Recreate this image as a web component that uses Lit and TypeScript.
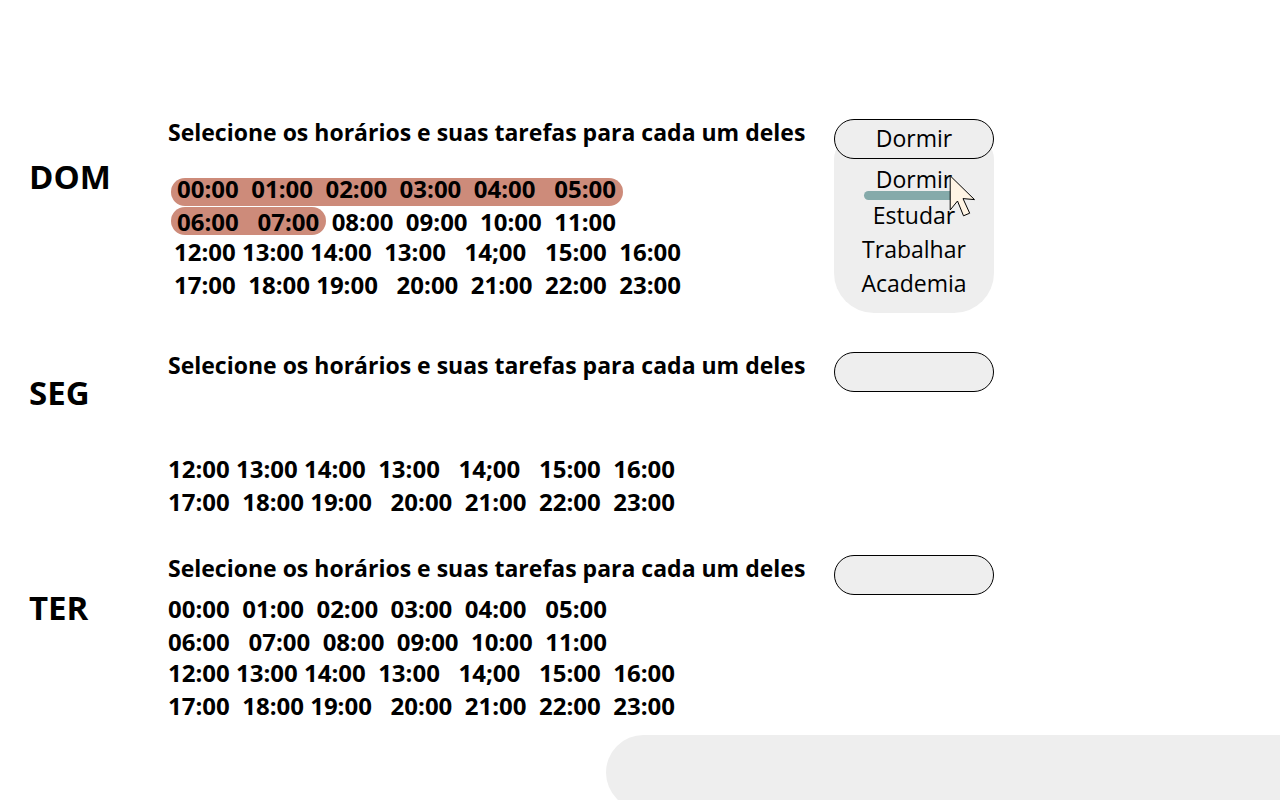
import { LitElement, html, css, nothing } from "lit";
import { customElement, property, state } from "lit/decorators.js";

interface Day {
  id: string;
  label: string;
  early: string[];
  late: string[];
  marks: number[];
  task: string;
  open: boolean;
}

const EARLY = [
  "00:00  01:00  02:00  03:00  04:00   05:00",
  "06:00   07:00  08:00  09:00  10:00  11:00",
];
const LATE = [
  "12:00 13:00 14:00  13:00   14;00   15:00  16:00",
  "17:00  18:00 19:00   20:00  21:00  22:00  23:00",
];
const TASKS = ["Dormir", "Estudar", "Trabalhar", "Academia"];

const DAYS: Day[] = [
  { id: "dom", label: "DOM", early: EARLY, late: LATE, marks: [452, 155], task: "Dormir", open: true },
  { id: "seg", label: "SEG", early: [], late: LATE, marks: [], task: "", open: false },
  { id: "ter", label: "TER", early: EARLY, late: LATE, marks: [], task: "", open: false },
];

@customElement("task-picker")
export class TaskPicker extends LitElement {
  static styles = css`
    :host {
      display: block;
      position: relative;
      font: 23px/32px "Open Sans", "Noto Sans", sans-serif;
    }
    .field {
      position: relative;
      z-index: 2;
      display: block;
      box-sizing: border-box;
      width: 100%;
      height: 40px;
      margin: 0;
      padding: 0 0 2px;
      border: 1px solid #000;
      border-radius: 20px;
      background: #eee;
      color: #000;
      font: inherit;
      text-align: center;
      text-align-last: center;
      appearance: none;
    }
    .menu {
      position: absolute;
      z-index: 1;
      top: 20px;
      left: 0;
      right: 0;
      display: flex;
      flex-direction: column;
      align-items: center;
      gap: 2px;
      box-sizing: border-box;
      padding: 24px 0 14px;
      border-radius: 20px 20px 40px 40px;
      background: #eee;
    }
    .option {
      position: relative;
      margin: 0;
      padding: 0;
      border: 0;
      background: none;
      color: #000;
      font: inherit;
    }
    .option.current {
      margin-bottom: 2px;
    }
    .option.current::after {
      content: "";
      position: absolute;
      left: -12px;
      right: -4px;
      bottom: -5px;
      height: 9px;
      border-radius: 5px;
      background: #85aaaa;
    }
    .pointer {
      position: absolute;
      z-index: 3;
      top: 56px;
      left: 115px;
      width: 28px;
      height: 44px;
      pointer-events: none;
    }
  `;

  @property() name = "";
  @property() value = "";
  @property({ type: Boolean }) open = false;

  private pick(task: string) {
    this.value = task;
    this.open = false;
  }

  render() {
    return html`
      <select
        class="field"
        aria-label="Tarefa de ${this.name}"
        @change=${(e: Event) => (this.value = (e.target as HTMLSelectElement).value)}
      >
        <option value="" ?selected=${this.value === ""}></option>
        ${TASKS.map((t) => html`<option value=${t} ?selected=${this.value === t}>${t}</option>`)}
      </select>
      ${this.open
        ? html`
            <div class="menu" role="listbox" aria-label="Tarefas">
              ${TASKS.map(
                (t) => html`<button
                  type="button"
                  role="option"
                  aria-selected=${this.value === t}
                  class="option ${this.value === t ? "current" : ""}"
                  @click=${() => this.pick(t)}
                >${t}</button>`
              )}
            </div>
            <svg class="pointer" viewBox="0 0 28 44" aria-hidden="true">
              <path
                d="M1.2 0.8 L25.5 24.6 L14 23.6 L20.7 38.2 L14.5 40.8 L8.5 26 L1.2 35 Z"
                fill="#fff4e4"
                stroke="#000"
                stroke-width="1"
              />
            </svg>
          `
        : nothing}
    `;
  }
}

@customElement("app-root")
export class AppRoot extends LitElement {
  static styles = css`
    :host {
      display: block;
      color: #000;
      background: #fff;
      font-family: "Open Sans", "Noto Sans", sans-serif;
    }
    .page {
      box-sizing: border-box;
      height: 100vh;
      overflow: hidden;
      padding-top: 116px;
    }
    .day {
      display: grid;
      grid-template-columns: 139px 666px 160px;
      align-items: start;
      padding-left: 29px;
    }
    .name {
      margin: 0;
      font-size: 33px;
      line-height: 46px;
      font-weight: 700;
    }
    .title {
      margin: 0;
      font-size: 23px;
      line-height: 32px;
      font-weight: 700;
      white-space: nowrap;
    }
    .hours {
      position: relative;
      font-size: 24px;
      line-height: 33px;
      font-weight: 700;
    }
    .row {
      position: relative;
      margin: 0;
      white-space: pre;
    }
    .late {
      margin-top: -2px;
    }
    .marks {
      position: absolute;
      top: 6px;
      left: 3px;
      display: flex;
      flex-direction: column;
      gap: 1px;
    }
    .mark {
      height: 28px;
      border-radius: 14px;
      background: #cd8b7a;
    }
    .picker {
      margin-top: 3px;
    }
    .dom {
      margin-bottom: 48px;
    }
    .dom .name {
      margin-top: 38px;
    }
    .dom .early {
      margin-top: 24px;
      padding-left: 9px;
    }
    .dom .late {
      margin-top: -3px;
      padding-left: 6px;
    }
    .seg {
      margin-bottom: 34px;
    }
    .seg .name {
      margin-top: 21px;
    }
    .seg .late {
      margin-top: 71px;
    }
    .ter {
      margin-bottom: 13px;
    }
    .ter .name {
      margin-top: 33px;
    }
    .ter .early {
      margin-top: 8px;
    }
    .bar {
      height: 75px;
      margin-left: 606px;
      margin-right: -40px;
      border-radius: 38px;
      background: #eee;
    }
  `;

  @state() private days = DAYS;

  private block(kind: string, rows: string[], marks: number[] = []) {
    if (!rows.length) return nothing;
    return html`<div class="hours ${kind}">
      ${marks.length
        ? html`<div class="marks">
            ${marks.map((w) => html`<div class="mark" style="width:${w}px"></div>`)}
          </div>`
        : nothing}
      ${rows.map((r) => html`<p class="row">${r}</p>`)}
    </div>`;
  }

  render() {
    return html`<main class="page">
      ${this.days.map(
        (d) => html`<section class="day ${d.id}">
          <h2 class="name">${d.label}</h2>
          <div>
            <h3 class="title">Selecione os horários e suas tarefas para cada um deles</h3>
            ${this.block("early", d.early, d.marks)} ${this.block("late", d.late)}
          </div>
          <task-picker class="picker" .name=${d.label} .value=${d.task} .open=${d.open}></task-picker>
        </section>`
      )}
      <div class="bar"></div>
    </main>`;
  }
}
